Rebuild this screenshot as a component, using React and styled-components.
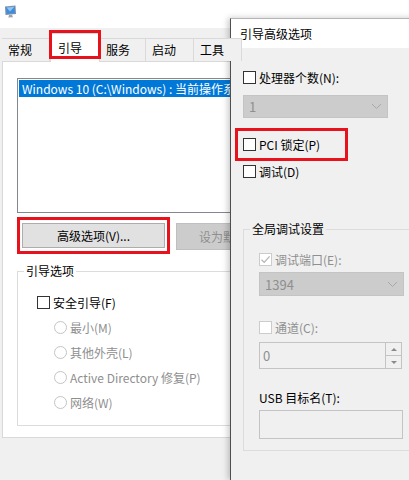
import React from "react";
import styled, { createGlobalStyle } from "styled-components";

const GlobalStyle = createGlobalStyle`
  html, body {
    margin: 0;
    padding: 0;
  }
  body {
    font-family: "Noto Sans CJK SC", "Noto Sans", sans-serif;
    font-size: 12px;
    color: #000;
  }
`;

const RED = "#e8121c";
const DISABLED_TEXT = "#8f8f8f";

function CheckMark({ color }) {
  return (
    <svg width="11" height="11" viewBox="0 0 11 11">
      <path d="M1.5 5.8 L4.2 8.4 L9.6 2.4" fill="none" stroke={color} strokeWidth="1.3" />
    </svg>
  );
}

function Chevron() {
  return (
    <svg width="11" height="7" viewBox="0 0 11 7">
      <path d="M1 1 L5.5 5.5 L10 1" fill="none" stroke="#a8a8a8" strokeWidth="1" />
    </svg>
  );
}

function MonitorIcon() {
  return (
    <svg width="13" height="13" viewBox="0 0 13 13">
      <path d="M1 1.5 L11.5 0.5 L12 9 L1.5 10 Z" fill="#7f8ea8" />
      <path d="M2.2 2.5 L10.5 1.7 L10.9 8 L2.6 8.8 Z" fill="#3b8fe0" />
      <path d="M2.6 2.6 L10.4 1.8 L6 6.5 Z" fill="#8fc4f4" />
      <path d="M5 10 L8 9.8 L9 12.3 L4.3 12.6 Z" fill="#9aa3b2" />
    </svg>
  );
}

function Check({ checked, disabled }) {
  return (
    <CheckBox $disabled={disabled}>
      {checked && <CheckMark color={disabled ? "#b5b5b5" : "#222"} />}
    </CheckBox>
  );
}

function Select({ value, width, height }) {
  return (
    <SelectBox $width={width} $height={height}>
      <span>{value}</span>
      <Chevron />
    </SelectBox>
  );
}

export default function App() {
  const tabs = ["常规", "引导", "服务", "启动", "工具"];
  const tabWidths = [48, 50, 46, 48, 48];

  return (
    <>
      <GlobalStyle />
      <Desktop>
        <MainWindow>
          <TitleBar>
            <MonitorIcon />
          </TitleBar>
          <WindowBody>
            <TabStrip>
              {tabs.map((t, i) => (
                <Tab key={t} $active={i === 1} $width={tabWidths[i]}>
                  {t}
                </Tab>
              ))}
            </TabStrip>
            <TabPanel>
              <ListBox>
                <ListItem>Windows 10 (C:\Windows) : 当前操作系统</ListItem>
              </ListBox>
              <ButtonRow>
                <Highlight>
                  <PushButton>高级选项(V)...</PushButton>
                </Highlight>
                <PushButton $disabled>设为默认值</PushButton>
              </ButtonRow>
              <GroupBox>
                <Legend>引导选项</Legend>
                <OptionRow $indent={19}>
                  <Check />
                  <span>安全引导(F)</span>
                </OptionRow>
                {["最小(M)", "其他外壳(L)", "Active Directory 修复(P)", "网络(W)"].map((r) => (
                  <OptionRow key={r} $indent={36} $disabled>
                    <Radio />
                    <span>{r}</span>
                  </OptionRow>
                ))}
              </GroupBox>
            </TabPanel>
          </WindowBody>
        </MainWindow>

        <AdvancedDialog>
          <DialogTitle>引导高级选项</DialogTitle>
          <DialogBody>
            <FieldRow>
              <Check />
              <span>处理器个数(N):</span>
            </FieldRow>
            <Spacer $h={8} />
            <Select value="1" width={145} height={23} />
            <Spacer $h={10} />
            <PciHighlight>
              <FieldRow>
                <Check />
                <span>PCI 锁定(P)</span>
              </FieldRow>
            </PciHighlight>
            <FieldRow>
              <Check />
              <span>调试(D)</span>
            </FieldRow>
            <DebugGroup>
              <Legend>全局调试设置</Legend>
              <GroupContent>
                <FieldRow $disabled>
                  <Check checked disabled />
                  <span>调试端口(E):</span>
                </FieldRow>
                <Spacer $h={3} />
                <Select value="1394" width={145} height={24} />
                <Spacer $h={21} />
                <FieldRow $disabled>
                  <Check disabled />
                  <span>通道(C):</span>
                </FieldRow>
                <Spacer $h={5} />
                <Spinner>
                  <SpinnerValue>0</SpinnerValue>
                  <SpinnerButtons>
                    <SpinButton>
                      <Arrow $up />
                    </SpinButton>
                    <SpinButton>
                      <Arrow />
                    </SpinButton>
                  </SpinnerButtons>
                </Spinner>
                <Spacer $h={18} />
                <FieldRow>
                  <span>USB 目标名(T):</span>
                </FieldRow>
                <Spacer $h={3} />
                <TextBox />
              </GroupContent>
            </DebugGroup>
          </DialogBody>
        </AdvancedDialog>
      </Desktop>
    </>
  );
}

const Desktop = styled.div`
  position: relative;
  width: 409px;
  height: 480px;
  overflow: hidden;
  background: #f0f0f0;
`;

const MainWindow = styled.div`
  display: flex;
  flex-direction: column;
  height: 480px;
`;

const TitleBar = styled.div`
  height: 28px;
  flex: none;
  background: #ffffff;
  padding: 4px 0 0 4px;
  box-sizing: border-box;
`;

const WindowBody = styled.div`
  flex: 1;
  background: #f0f0f0;
  padding-top: 5px;
`;

const TabStrip = styled.div`
  display: flex;
  align-items: flex-end;
  height: 28px;
  padding-left: 2px;
`;

const Tab = styled.div`
  position: relative;
  flex: none;
  box-sizing: border-box;
  width: ${(p) => p.$width}px;
  height: ${(p) => (p.$active ? 29 : 23)}px;
  margin-bottom: ${(p) => (p.$active ? -1 : 0)}px;
  z-index: ${(p) => (p.$active ? 2 : 1)};
  padding-left: ${(p) => (p.$active ? 7 : 6)}px;
  padding-top: ${(p) => (p.$active ? 6 : 3)}px;
  line-height: 16px;
  background: ${(p) => (p.$active ? "#ffffff" : "#f0f0f0")};
  border: 1px solid #d9d9d9;
  border-bottom: none;
  border-left-width: ${(p) => (p.$active ? 1 : 0)}px;
  white-space: nowrap;

  &::after {
    content: "";
    display: ${(p) => (p.$active ? "block" : "none")};
    position: absolute;
    left: -2px;
    right: -2px;
    top: -4px;
    bottom: 3px;
    border: 3px solid ${RED};
  }
`;

const TabPanel = styled.div`
  box-sizing: border-box;
  height: 377px;
  margin-left: 2px;
  margin-right: -20px;
  background: #ffffff;
  border: 1px solid #d9d9d9;
  padding: 16px 0 0 14px;
`;

const ListBox = styled.div`
  box-sizing: border-box;
  height: 135px;
  width: 214px;
  border: 1px solid #828790;
  border-right: none;
  padding: 1px 0 1px 1px;
  overflow: hidden;
`;

const ListItem = styled.div`
  height: 17px;
  line-height: 17px;
  padding-left: 3px;
  background: #0078d7;
  color: #ffffff;
  white-space: nowrap;
  overflow: hidden;
`;

const ButtonRow = styled.div`
  display: flex;
  align-items: center;
  gap: 6px;
  margin-top: 4px;
`;

const Highlight = styled.div`
  border: 3px solid ${RED};
  padding: 3px 2px;
`;

const PushButton = styled.div`
  box-sizing: border-box;
  display: flex;
  align-items: center;
  justify-content: ${(p) => (p.$disabled ? "flex-start" : "center")};
  flex: none;
  width: ${(p) => (p.$disabled ? 54 : 143)}px;
  height: ${(p) => (p.$disabled ? 27 : 25)}px;
  padding-left: ${(p) => (p.$disabled ? 22 : 0)}px;
  margin-top: ${(p) => (p.$disabled ? 2 : 0)}px;
  background: ${(p) => (p.$disabled ? "#cccccc" : "#e1e1e1")};
  border: 1px solid ${(p) => (p.$disabled ? "#bfbfbf" : "#adadad")};
  border-right-width: ${(p) => (p.$disabled ? 0 : 1)}px;
  color: ${(p) => (p.$disabled ? DISABLED_TEXT : "#000")};
  white-space: nowrap;
  overflow: hidden;
`;

const GroupBox = styled.fieldset`
  margin: 9px 0 0 0;
  padding: 11px 0 10px 0;
  width: 320px;
  border: 1px solid #dcdcdc;
`;

const Legend = styled.legend`
  margin-left: 6px;
  padding: 0 2px;
  line-height: 16px;
`;

const OptionRow = styled.div`
  display: flex;
  align-items: center;
  gap: 3px;
  height: 25px;
  padding-left: ${(p) => p.$indent}px;
  color: ${(p) => (p.$disabled ? DISABLED_TEXT : "#000")};
  white-space: nowrap;
`;

const CheckBox = styled.span`
  box-sizing: border-box;
  display: inline-flex;
  align-items: center;
  justify-content: center;
  flex: none;
  width: 13px;
  height: 13px;
  background: #ffffff;
  border: 1px solid ${(p) => (p.$disabled ? "#cccccc" : "#333333")};
`;

const Radio = styled.span`
  box-sizing: border-box;
  flex: none;
  width: 13px;
  height: 13px;
  border-radius: 50%;
  background: #ffffff;
  border: 1px solid #c4c4c4;
`;

const AdvancedDialog = styled.div`
  position: absolute;
  left: 230px;
  top: 18px;
  width: 200px;
  height: 462px;
  box-sizing: border-box;
  background: #f0f0f0;
  border-left: 1px solid #4f4f4f;
  border-top: 1px solid #b4b4b4;
  box-shadow: -2px 0 6px rgba(0, 0, 0, 0.22);
  display: flex;
  flex-direction: column;
`;

const DialogTitle = styled.div`
  height: 29px;
  line-height: 29px;
  padding-left: 9px;
  background: #ffffff;
  flex: none;
`;

const DialogBody = styled.div`
  display: flex;
  flex-direction: column;
  align-items: flex-start;
  padding: 19px 0 0 12px;
`;

const FieldRow = styled.div`
  display: flex;
  align-items: center;
  gap: 3px;
  height: 20px;
  color: ${(p) => (p.$disabled ? DISABLED_TEXT : "#000")};
  white-space: nowrap;
`;

const Spacer = styled.div`
  height: ${(p) => p.$h}px;
  flex: none;
`;

const SelectBox = styled.div`
  box-sizing: border-box;
  display: flex;
  align-items: center;
  justify-content: space-between;
  width: ${(p) => p.$width}px;
  height: ${(p) => p.$height}px;
  padding: 0 5px 0 5px;
  background: #cccccc;
  border: 1px solid #c4c4c4;
  color: ${DISABLED_TEXT};
  font-size: 13px;
`;

const PciHighlight = styled.div`
  box-sizing: border-box;
  display: flex;
  align-items: center;
  width: 113px;
  height: 33px;
  margin-left: -8px;
  padding-left: 5px;
  border: 3px solid ${RED};
`;

const DebugGroup = styled.fieldset`
  margin: 40px 0 0 0;
  padding: 12px 0 11px 0;
  width: 175px;
  box-sizing: border-box;
  border: 1px solid #dcdcdc;
`;

const GroupContent = styled.div`
  display: flex;
  flex-direction: column;
  align-items: flex-start;
  padding-left: 15px;
`;

const Spinner = styled.div`
  box-sizing: border-box;
  display: flex;
  width: 143px;
  height: 27px;
  border: 1px solid #c4c4c4;
  background: #f0f0f0;
`;

const SpinnerValue = styled.div`
  flex: 1;
  padding-left: 3px;
  line-height: 25px;
  color: ${DISABLED_TEXT};
  font-size: 13px;
`;

const SpinnerButtons = styled.div`
  display: flex;
  flex-direction: column;
  width: 15px;
  border-left: 1px solid #c4c4c4;
`;

const SpinButton = styled.div`
  flex: 1;
  display: flex;
  align-items: center;
  justify-content: center;
  & + & {
    border-top: 1px solid #c4c4c4;
  }
`;

const Arrow = styled.span`
  width: 0;
  height: 0;
  border-left: 3px solid transparent;
  border-right: 3px solid transparent;
  ${(p) => (p.$up ? "border-bottom: 3px solid #8a8a8a;" : "border-top: 3px solid #8a8a8a;")}
`;

const TextBox = styled.div`
  box-sizing: border-box;
  width: 144px;
  height: 29px;
  border: 1px solid #c4c4c4;
  background: #f0f0f0;
`;
